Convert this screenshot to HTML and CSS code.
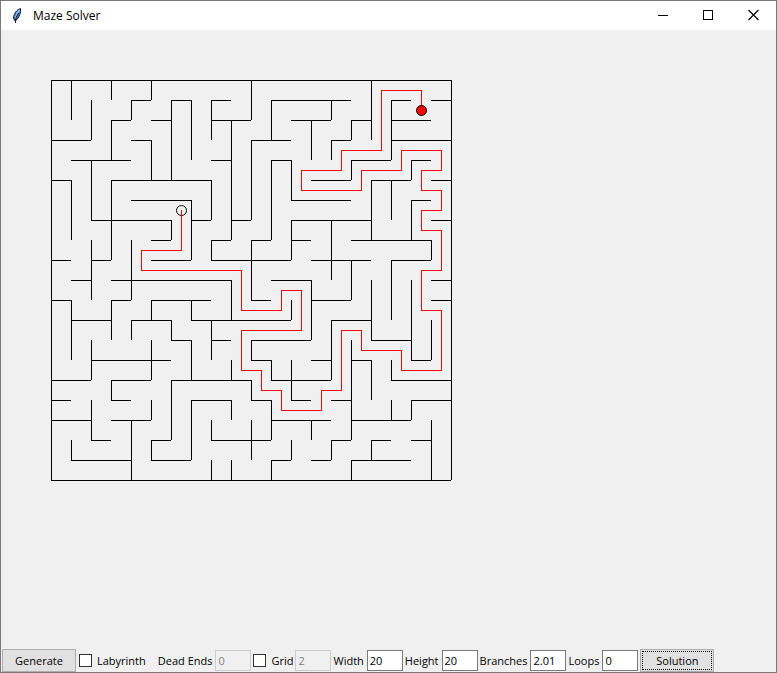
FILE: index.html
```
<!DOCTYPE html>
<html lang="en">
<head>
<meta charset="utf-8">
<title>Maze Solver</title>
<link rel="stylesheet" href="styles.css">
</head>
<body>
<div class="window">
  <header class="titlebar">
    <svg class="feather" width="12" height="18" viewBox="0 0 12 18" aria-hidden="true">
      <path d="M9.500 1.500C6 2.500 3 6 2.500 11L3.500 13.500L6 12.500C8.500 9.500 10 5.500 9.500 1.500Z" fill="#3f7fd0" stroke="#15202e" stroke-width="1"/>
      <path d="M8.500 3C6.500 5 5 8 4.500 11" fill="none" stroke="#9cc8f5" stroke-width="1.500"/>
      <path d="M7.500 6C5.500 9 4.500 12 4.500 16" fill="none" stroke="#111" stroke-width="1"/>
    </svg>
    <h1 class="title">Maze Solver</h1>
    <div class="controls">
      <button class="control" type="button" aria-label="Minimize">
        <svg width="11" height="12" viewBox="0 0 11 12" shape-rendering="crispEdges"><path d="M0 6.500H10" stroke="#000"/></svg>
      </button>
      <button class="control" type="button" aria-label="Maximize">
        <svg width="11" height="12" viewBox="0 0 11 12" shape-rendering="crispEdges"><path d="M.5 1.500H9.500V10.500H.5Z" fill="none" stroke="#000"/></svg>
      </button>
      <button class="control" type="button" aria-label="Close">
        <svg width="11" height="12" viewBox="0 0 11 12"><path d="M.5 1L10.500 11M10.500 1L.5 11" stroke="#000" stroke-width="1.200"/></svg>
      </button>
    </div>
  </header>
  <main class="canvas">
    <svg class="maze" width="402" height="402" viewBox="0 0 402 402" role="img" aria-label="Maze with solution path">
      <g transform="translate(.4 .4) scale(20)" fill="none" stroke-width=".05" shape-rendering="crispEdges">
        <path class="wall" d="M0 0H20M0 20H20M0 0V20M20 0V20"/>
        <path class="wall" d="M1 0V2M1 5V8M1 11V14M1 18V19
          M2 1V3M2 4V7M2 8V11M2 13V15M2 16V18
          M3 0V1M3 2V4M3 5V9M3 11V13M3 15V16
          M4 1V2M4 8V11M4 12V13M4 17V20
          M5 0V1M5 3V5M5 11V12M5 13V15M5 16V17M5 18V19
          M6 1V5M6 7V8M6 12V13M6 15V18
          M7 1V4M7 6V9M7 11V12M7 13V15M7 16V19
          M8 1V3M8 5V7M8 8V9M8 12V14M8 17V18M8 19V20
          M9 2V8M9 10V12M9 14V15M9 16V17M9 19V20
          M10 0V2M10 3V7M10 8V11M10 13V14M10 15V16M10 17V19
          M11 1V3M11 4V8M11 14V15M11 16V18M11 19V20
          M12 4V6M12 7V9M12 11V12M12 14V16M12 18V19
          M13 2V4M13 10V13M13 17V18
          M14 1V2M14 3V4M14 7V10M14 12V15M14 18V19
          M15 2V3M15 4V5M15 9V11M15 13V18M15 19V20
          M16 0V3M16 5V8M16 10V13M16 14V16M16 18V19
          M17 1V4M17 5V7M17 9V12M17 14V15M17 16V17
          M18 4V5M18 6V8M18 10V14M18 16V17
          M19 8V9M19 12V14M19 17V20"/>
        <path class="wall" d="M4 1H5M6 1H7M8 1H9M11 1H15M17 1H18M19 1H20
          M3 2H4M5 2H6M8 2H10M12 2H14M15 2H16M17 2H19
          M0 3H2M4 3H5M10 3H12M14 3H15M17 3H20
          M1 4H4M8 4H9M11 4H12M15 4H17M18 4H19
          M0 5H1M3 5H8M13 5H15M16 5H18M19 5H20
          M4 6H7M12 6H15M18 6H19
          M2 7H6M7 7H8M9 7H10M12 7H16M19 7H20
          M5 8H6M8 8H9M10 8H11M12 8H13M15 8H19
          M0 9H1M2 9H3M5 9H7M8 9H12M13 9H16M17 9H19
          M1 10H2M3 10H9M11 10H13M19 10H20
          M0 11H1M3 11H4M5 11H8M10 11H11M13 11H15M19 11H20
          M1 12H3M4 12H6M7 12H12M14 12H16
          M6 13H7M8 13H9M10 13H13M16 13H18
          M2 14H6M10 14H11M13 14H14M15 14H16M18 14H19
          M0 15H2M3 15H5M6 15H10M11 15H14M17 15H20
          M0 16H1M3 16H4M7 16H9M10 16H11M12 16H13M14 16H15M18 16H20
          M0 17H2M3 17H5M11 17H14M15 17H18
          M2 18H3M5 18H6M8 18H11M14 18H15M16 18H17M18 18H19
          M1 19H4M5 19H7M11 19H12M13 19H14M15 19H18"/>
      </g>
      <circle cx="130.500" cy="130.500" r="5" fill="none" stroke="#000"/>
      <g transform="translate(.4 .4) scale(20)" fill="none" stroke-width=".05" shape-rendering="crispEdges">
        <path class="route" d="M6.500 6.500V8.500H4.500V9.500H9.500V11.500H11.500V10.500H12.500V12.500H9.500V14.500H10.500V15.500H11.500V16.500H13.500V15.500H14.500V12.500H15.500V13.500H17.500V14.500H19.500V11.500H18.500V9.500H19.500V7.500H18.500V6.500H19.500V5.500H18.500V4.500H19.500V3.500H17.500V4.500H15.500V5.500H12.500V4.500H14.500V3.500H16.500V.5H18.500V1.500"/>
      </g>
      <circle cx="370.500" cy="30.500" r="5" fill="#f00" stroke="#000"/>
    </svg>
  </main>
  <form class="toolbar">
    <button class="button" type="button">Generate</button>
    <label class="check wide"><input type="checkbox">Labyrinth</label>
    <label class="field" for="dead-ends">Dead Ends</label>
    <input class="entry" id="dead-ends" type="text" value="0" disabled>
    <label class="check"><input type="checkbox">Grid</label>
    <input class="entry" type="text" value="2" aria-label="Grid size" disabled>
    <label class="field" for="width">Width</label>
    <input class="entry" id="width" type="text" value="20">
    <label class="field" for="height">Height</label>
    <input class="entry" id="height" type="text" value="20">
    <label class="field" for="branches">Branches</label>
    <input class="entry" id="branches" type="text" value="2.01">
    <label class="field" for="loops">Loops</label>
    <input class="entry" id="loops" type="text" value="0">
    <button class="button focused" type="button">Solution</button>
  </form>
</div>
</body>
</html>
```
FILE: styles.css
```
* {
  box-sizing: border-box;
}

body {
  margin: 0;
  font: 11px/16px "Open Sans", "Noto Sans", sans-serif;
  color: #000;
}

.window {
  display: flex;
  flex-direction: column;
  min-height: 100vh;
  border: 1px solid #7a7a7a;
  background: #f0f0f0;
}

.titlebar {
  display: flex;
  align-items: center;
  height: 29px;
  padding-left: 10px;
  background: #fff;
}

.feather {
  margin-right: 10px;
}

.title {
  margin: 0;
  font-size: 12px;
  font-weight: 400;
}

.controls {
  display: flex;
  margin-left: auto;
}

.control {
  display: flex;
  align-items: center;
  justify-content: center;
  width: 45px;
  height: 29px;
  padding: 0 0 2px;
  border: 0;
  background: none;
}

.canvas {
  flex: 1;
  padding: 50px;
}

.maze {
  display: block;
}

.wall {
  stroke: #000;
}

.route {
  stroke: #f00;
}

.toolbar {
  display: flex;
  align-items: center;
  gap: 2px;
  padding: 0 1px;
  white-space: nowrap;
}

.button {
  width: 74px;
  height: 23px;
  padding: 0;
  border: 1px solid #adadad;
  background: #e1e1e1;
  color: #000;
  font: inherit;
}

.focused {
  outline: 1px dotted #000;
  outline-offset: -3px;
}

.field {
  padding-right: 1px;
}

.check {
  display: flex;
  align-items: center;
  gap: 5px;
}

.wide {
  margin: 0 10px 0 1px;
}

.check input {
  appearance: none;
  width: 13px;
  height: 13px;
  margin: 0;
  border: 1px solid #333;
  background: #fff;
}

.entry {
  width: 36px;
  height: 21px;
  padding: 0 2px;
  border: 1px solid #7a7a7a;
  border-radius: 0;
  background: #fff;
  color: #000;
  font: inherit;
}

.entry:disabled {
  border-color: #ccc;
  background: #f0f0f0;
  color: #838383;
}
```
